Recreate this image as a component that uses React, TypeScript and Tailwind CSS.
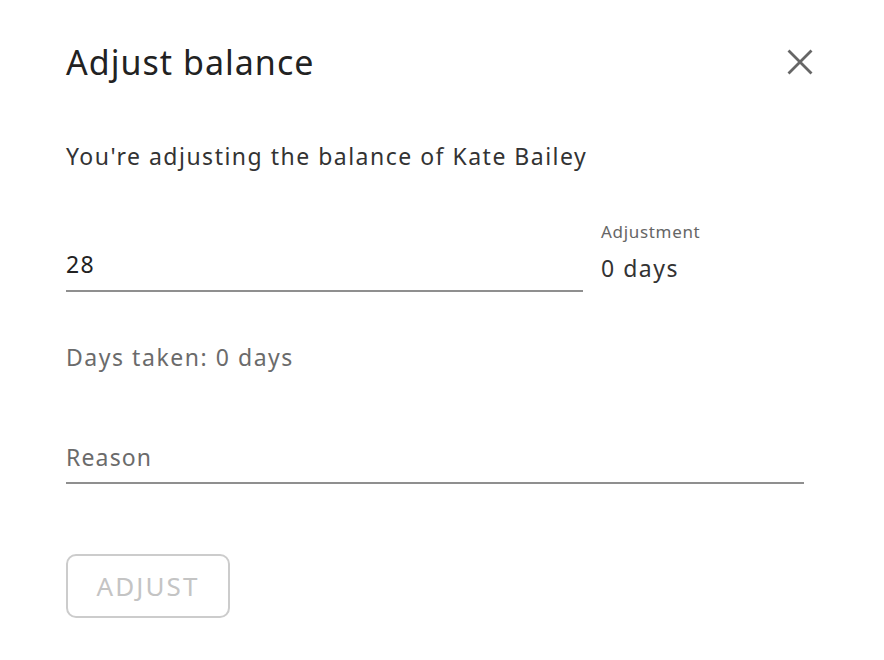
import React from 'react';

const App: React.FC = () => {
  const [value, setValue] = React.useState('28');
  const [reason, setReason] = React.useState('');

  return (
    <div className="min-h-screen w-full bg-white font-['Noto_Sans','Open_Sans',sans-serif] text-[#222]">
      <div className="pl-[66px] pr-[64px] pt-[38px]">
        {/* Header */}
        <div className="flex items-center justify-between">
          <h1 className="text-[34px] leading-[48px] tracking-[0.03em] text-[#222]">Adjust balance</h1>
          <button className="flex h-10 w-10 items-center justify-center text-[#666]">
            <svg width="28" height="28" viewBox="0 0 24 24" fill="none" stroke="currentColor" strokeWidth="2.4" strokeLinecap="square">
              <path d="M3 3L21 21M21 3L3 21" />
            </svg>
          </button>
        </div>

        <p className="mt-[56px] text-[23px] leading-[28px] tracking-[0.065em] text-[#333]">
          You're adjusting the balance of Kate Bailey
        </p>

        {/* Balance + adjustment */}
        <div className="mt-[52px] flex items-end gap-[18px]">
          <div className="w-[517px] border-b-2 border-[#8f8f8f]">
            <input
              value={value}
              onChange={(e) => setValue(e.target.value)}
              className="w-full bg-transparent pb-[12px] text-[23px] leading-[28px] tracking-[0.06em] text-[#222] outline-none"
            />
          </div>
          <div className="flex flex-col pb-[10px]">
            <span className="text-[17px] leading-[20px] tracking-[0.04em] text-[#666]">Adjustment</span>
            <span className="mt-[12px] text-[23px] leading-[28px] tracking-[0.065em] text-[#333]">0 days</span>
          </div>
        </div>

        <p className="mt-[51px] text-[23px] leading-[28px] tracking-[0.067em] text-[#6b6b6b]">Days taken: 0 days</p>

        {/* Reason */}
        <div className="mt-[72px] w-[738px] border-b-2 border-[#8f8f8f]">
          <input
            value={reason}
            onChange={(e) => setReason(e.target.value)}
            placeholder="Reason"
            className="w-full bg-transparent pb-[11px] text-[23px] leading-[28px] tracking-[0.05em] text-[#222] outline-none placeholder:text-[#6b6b6b]"
          />
        </div>

        <button
          disabled
          className="mt-[70px] flex h-[64px] w-[164px] items-center justify-center rounded-[10px] border-2 border-[#cccccc] text-[26px] tracking-[0.08em] text-[#c4c4c4]"
        >
          ADJUST
        </button>
      </div>
    </div>
  );
};

export default App;
